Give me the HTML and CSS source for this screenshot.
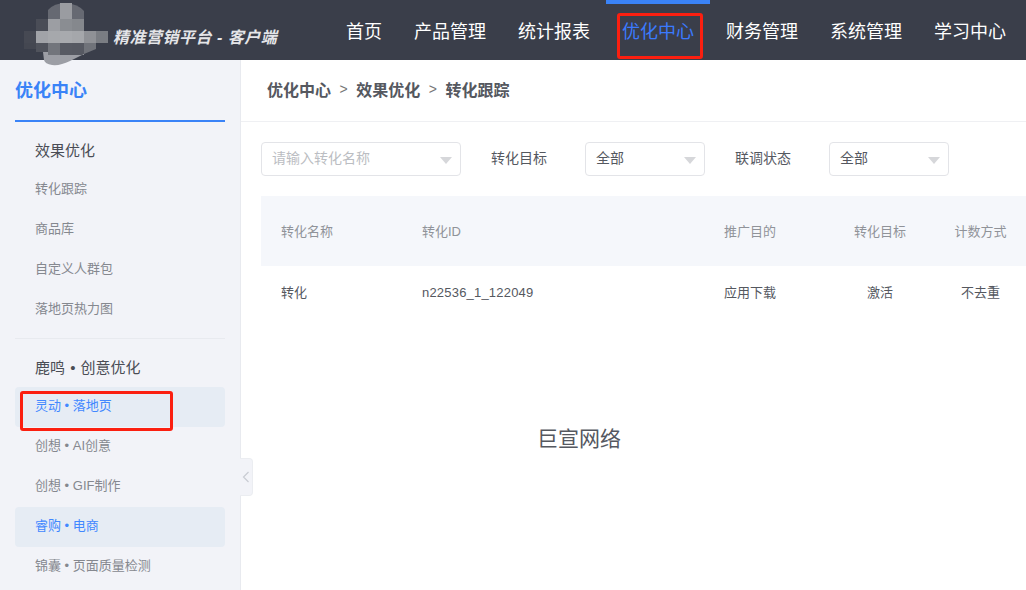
FILE: index.html
```html
<!DOCTYPE html>
<html lang="zh-CN">
<head>
<meta charset="utf-8">
<title>优化中心</title>
<link rel="stylesheet" href="styles.css">
</head>
<body>
<header class="topbar">
  <div class="brand">
    <svg class="mosaic" width="90" height="68" viewBox="0 0 90 68" aria-hidden="true">
      <path d="M24 10 Q30 3 42 3 Q54 4 60 11 L60 19 L24 19 Z" fill="#666972"/>
      <rect x="36" y="3" width="12" height="16" fill="#9a9ca1"/>
      <rect x="12" y="19" width="12" height="12" fill="#4a4d57"/><rect x="24" y="19" width="12" height="12" fill="#9c9ea3"/><rect x="36" y="19" width="12" height="12" fill="#8a8d92"/><rect x="48" y="19" width="12" height="12" fill="#85888d"/>
      <rect x="0" y="31" width="12" height="12" fill="#464953"/><rect x="12" y="31" width="12" height="12" fill="#a1a3a8"/><rect x="24" y="31" width="12" height="12" fill="#a6a8ac"/><rect x="36" y="31" width="12" height="12" fill="#a8aaae"/><rect x="48" y="31" width="12" height="12" fill="#a5a7ab"/><rect x="60" y="31" width="12" height="12" fill="#8f9196"/><rect x="72" y="31" width="12" height="12" fill="#7a7d83"/>
      <rect x="0" y="43" width="12" height="6" fill="#444751"/><rect x="12" y="43" width="12" height="9" fill="#50535c"/><rect x="24" y="43" width="12" height="12" fill="#72757c"/><rect x="36" y="43" width="12" height="12" fill="#575a63"/><rect x="48" y="43" width="12" height="12" fill="#565962"/>
      <path d="M60 43 H72 V49 L60 54 Z" fill="#70737a"/>
      <path d="M19 52 L24 52 L24 55 L60 55 L60 54 L46 61 Q36 66 28 65 Q21 64 20 60 Z" fill="#9c9ea5"/>
    </svg>
    <span class="brand-name">精准营销平台 - 客户端</span>
  </div>
  <nav class="nav">
    <a class="nav-item">首页</a>
    <a class="nav-item">产品管理</a>
    <a class="nav-item">统计报表</a>
    <a class="nav-item is-active">优化中心<span class="mark mark-nav"></span></a>
    <a class="nav-item">财务管理</a>
    <a class="nav-item">系统管理</a>
    <a class="nav-item">学习中心</a>
  </nav>
</header>
<div class="body">
  <aside class="sidebar">
    <h2 class="side-title">优化中心</h2>
    <section class="side-group side-group-first">
      <h3 class="group-title">效果优化</h3>
      <a class="side-item">转化跟踪</a>
      <a class="side-item">商品库</a>
      <a class="side-item">自定义人群包</a>
      <a class="side-item">落地页热力图</a>
    </section>
    <section class="side-group">
      <h3 class="group-title">鹿鸣 • 创意优化</h3>
      <a class="side-item is-current">灵动 • 落地页<span class="mark mark-side"></span></a>
      <a class="side-item">创想 • AI创意</a>
      <a class="side-item">创想 • GIF制作</a>
      <a class="side-item is-current">睿购 • 电商</a>
      <a class="side-item">锦囊 • 页面质量检测</a>
    </section>
    <button class="collapse" type="button" aria-label="收起">
      <svg width="8" height="12" viewBox="0 0 8 12"><path d="M6.5 1 L1.5 6 L6.5 11" fill="none" stroke="#c9ccd3" stroke-width="1.2"/></svg>
    </button>
  </aside>
  <main class="main">
    <div class="crumbs"><span>优化中心</span><i>&gt;</i><span>效果优化</span><i>&gt;</i><span>转化跟踪</span></div>
    <div class="filters">
      <div class="select select-wide is-placeholder">请输入转化名称</div>
      <label class="filter-label">转化目标</label>
      <div class="select">全部</div>
      <label class="filter-label">联调状态</label>
      <div class="select">全部</div>
    </div>
    <div class="table">
      <div class="tr th">
        <div>转化名称</div><div>转化ID</div><div>推广目的</div><div class="c">转化目标</div><div class="c">计数方式</div>
      </div>
      <div class="tr td">
        <div>转化</div><div class="id">n22536_1_122049</div><div>应用下载</div><div class="c">激活</div><div class="c">不去重</div>
      </div>
    </div>
    <div class="watermark">巨宣网络</div>
  </main>
</div>
</body>
</html>
```
FILE: styles.css
```css
* { box-sizing: border-box; }
html, body { margin: 0; height: 590px; overflow: hidden; }
body {
  background: #fff;
  font-family: "Liberation Sans", "Noto Sans CJK SC", sans-serif;
  font-size: 13px;
  color: #55585f;
}
a { display: block; }

.topbar {
  height: 60px;
  background: #3a3e4a;
  display: flex;
  justify-content: space-between;
  padding-right: 4px;
  position: relative;
}
.brand { display: flex; align-items: center; padding: 12px 0 0 113px; position: relative; z-index: 3; }
.mosaic { position: absolute; left: 24px; top: 0; }
.brand-name {
  color: #e4e5e8;
  font-size: 16px;
  letter-spacing: .5px;
  font-weight: 700;
  font-style: italic;
  white-space: nowrap;
  position: relative;
}
.nav { display: flex; }
.nav-item {
  padding: 0 16px;
  color: #fff;
  font-size: 18px;
  line-height: 65px;
  height: 60px;
  position: relative;
}
.nav-item.is-active { color: #3a7afe; }
.nav-item.is-active::before {
  content: "";
  position: absolute;
  left: 0; right: 0; top: 0;
  height: 4px;
  background: #3a83f7;
}
.mark { position: absolute; border: 3px solid #fb1f10; border-radius: 3px; z-index: 4; }
.mark-nav { left: 11px; top: 13px; width: 86px; height: 46px; }
.mark-side { left: 5px; top: 4px; width: 153px; height: 40px; }

.body { display: flex; height: 530px; }
.sidebar {
  width: 241px;
  flex: none;
  background: #f2f3f8;
  border-right: 1px solid #e8eaef;
  padding: 0 15px;
  position: relative;
}
.side-title {
  margin: 0;
  height: 62px;
  border-bottom: 2px solid #3a83f7;
  color: #3a83f7;
  font-size: 18px;
  font-weight: 700;
  line-height: 63px;
}
.side-group { border-top: 1px solid #e8eaef; padding-top: 14px; }
.side-group-first { border-top: 0; padding: 14px 0 10px; height: 216px; }
.group-title {
  margin: 0 0 4px;
  padding-left: 20px;
  font-size: 15px;
  font-weight: 400;
  color: #4a4d55;
  line-height: 30px;
  word-spacing: 1px;
}
.side-item {
  height: 40px;
  line-height: 38px;
  padding-left: 20px;
  color: #85888f;
  border-radius: 4px;
  position: relative;
}
.side-item.is-current { background: #e6ecf4; color: #4288ff; }
.collapse {
  position: absolute;
  left: 240px;
  top: 398px;
  width: 13px;
  height: 38px;
  padding: 0;
  background: #f2f3f8;
  border: 1px solid #ebedf1;
  border-left: 0;
  border-radius: 0 4px 4px 0;
  display: flex;
  align-items: center;
  justify-content: center;
}

.main { flex: 1; min-width: 0; overflow: hidden; position: relative; }
.crumbs {
  height: 62px;
  border-bottom: 1px solid #eff0f3;
  padding: 0 0 3px 26px;
  display: flex;
  align-items: center;
  gap: 8.5px;
  font-size: 16px;
  font-weight: 700;
  color: #55585f;
}
.crumbs i { font-style: normal; font-weight: 400; font-size: 14px; color: #777; }
.filters {
  display: flex;
  align-items: center;
  margin: 20px 0 20px 20px;
  height: 34px;
  font-size: 14px;
}
.select {
  width: 120px;
  height: 34px;
  line-height: 30px;
  padding-left: 10px;
  border: 1px solid #e3e4e8;
  border-radius: 4px;
  color: #55585f;
  position: relative;
}
.select::after {
  content: "";
  position: absolute;
  right: 8px;
  top: 14px;
  border-style: solid;
  border-width: 7px 6px 0;
  border-color: #d6d7da transparent transparent;
}
.select-wide { width: 200px; }
.is-placeholder { color: #bbbdc2; }
.filter-label { margin: 0 37px 2px 30px; color: #55585f; width: 57px; white-space: nowrap; line-height: 30px; }

.table { margin-left: 20px; width: 770px; }
.tr { display: grid; grid-template-columns: 161px 302px 106px 100px 101px; }
.tr > div { white-space: nowrap; }
.tr > div:first-child { padding-left: 20px; }
.tr .c { text-align: center; }
.th { height: 70px; line-height: 71px; background: #f5f7fb; color: #909399; }
.td { height: 52px; line-height: 53px; color: #55585f; }
.id { letter-spacing: .2px; }
.watermark {
  position: absolute;
  left: 296px;
  top: 362px;
  font-size: 21px;
  line-height: 34px;
  color: #55585f;
}
```
